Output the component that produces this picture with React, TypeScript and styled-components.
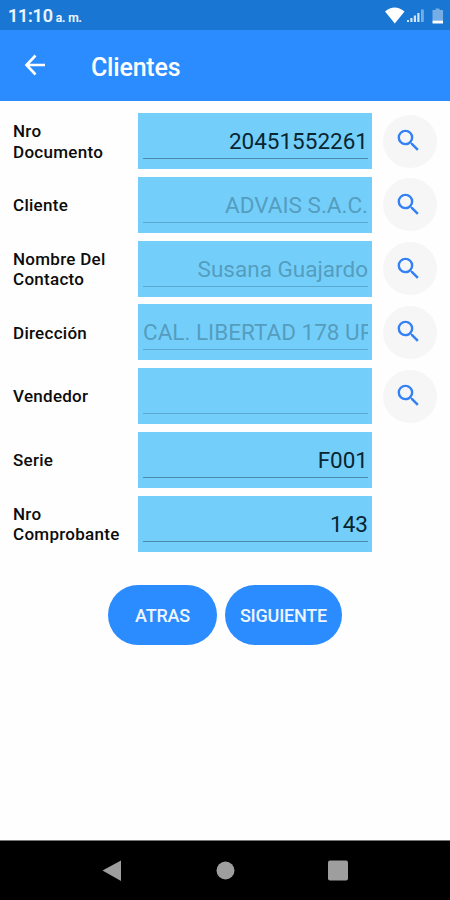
import React from "react";
import styled, { createGlobalStyle } from "styled-components";

const GlobalStyle = createGlobalStyle`
  * { box-sizing: border-box; }
  body { margin: 0; background: #fff; font-family: Roboto, sans-serif; }
`;

const Screen = styled.div`
  width: 450px;
  height: 900px;
  display: flex;
  flex-direction: column;
  overflow: hidden;
  background: #fefefe;
`;

const StatusBar = styled.header`
  height: 30px;
  padding: 3px 6px 0 8px;
  display: flex;
  align-items: center;
  justify-content: space-between;
  background: #1976d2;
  color: #eef6ff;
`;

const Clock = styled.div`
  font-size: 18px;
  font-weight: 500;
  line-height: 24px;
  letter-spacing: -0.2px;
  -webkit-text-stroke: 0.2px currentColor;
`;

const Meridiem = styled.span`
  margin-left: 3px;
  font-size: 12px;
  letter-spacing: -0.1px;
`;

const StatusIcons = styled.svg`
  display: block;
  width: 60px;
  height: 20px;
  margin-bottom: 3px;
`;

const AppBar = styled.div`
  height: 70.5px;
  padding-left: 22px;
  display: flex;
  align-items: center;
  background: #2b8cff;
  color: #fff;
`;

const BackButton = styled.button`
  width: 69px;
  height: 26px;
  padding: 0;
  border: 0;
  background: none;
  color: inherit;
`;

const BackIcon = styled.svg`
  display: block;
  width: 26px;
  height: 26px;
`;

const Title = styled.h1`
  margin: 5px 0 0;
  font-size: 25px;
  line-height: 30px;
  font-weight: 500;
  letter-spacing: -0.2px;
`;

const Form = styled.form`
  padding: 12.5px 13px 0;
  display: grid;
  row-gap: 7.8px;
`;

const Row = styled.div`
  height: 56px;
  display: grid;
  grid-template-columns: 125px 234px 54px;
  align-items: center;
`;

const Label = styled.label`
  padding: 1px 12px 0 0;
  font-size: 17px;
  line-height: 20.6px;
  font-weight: 500;
  letter-spacing: 0.28px;
  color: #0c0c0c;
`;

const Field = styled.div`
  height: 56px;
  padding: 12px 4px 0 5px;
  background: #73cffa;
`;

const Value = styled.div<{ $muted?: boolean; $start?: boolean }>`
  height: 34px;
  border-bottom: 1.5px solid ${(p) => (p.$muted ? "#5ba9d0" : "#4b8aa8")};
  overflow: hidden;
  white-space: nowrap;
  text-align: ${(p) => (p.$start ? "left" : "right")};
  font-size: 22.5px;
  line-height: 33.5px;
  color: ${(p) => (p.$muted ? "#559dbf" : "#0a2530")};
`;

const SearchButton = styled.button`
  width: 54px;
  height: 53px;
  margin-left: 11px;
  padding: 0 3px 1px 0;
  display: grid;
  place-items: center;
  border: 0;
  border-radius: 50%;
  background: #f6f6f6;
  color: #3480f5;
`;

const SearchIcon = styled.svg`
  width: 29px;
  height: 29px;
`;

const Actions = styled.div`
  margin-top: 33px;
  display: flex;
  justify-content: center;
  gap: 8px;
`;

const ActionButton = styled.button<{ $width: number }>`
  width: ${(p) => p.$width}px;
  height: 60px;
  padding: 2px 0 0;
  border: 0;
  border-radius: 30px;
  background: #2b8cff;
  color: #edf6ff;
  font: 500 18px/24px Roboto, sans-serif;
  letter-spacing: -0.2px;
`;

const NavBar = styled.nav`
  height: 60px;
  margin-top: auto;
  border-top: 1px solid #777;
  background: #000;
`;

const NavIcons = styled.svg`
  display: block;
  width: 450px;
  height: 59px;
`;

interface Entry {
  label: string;
  value: string;
  muted?: boolean;
  start?: boolean;
  search?: boolean;
}

const entries: Entry[] = [
  { label: "Nro Documento", value: "20451552261", search: true },
  { label: "Cliente", value: "ADVAIS S.A.C.", muted: true, search: true },
  { label: "Nombre Del Contacto", value: "Susana Guajardo", muted: true, search: true },
  { label: "Dirección", value: "CAL. LIBERTAD 178 UR", muted: true, start: true, search: true },
  { label: "Vendedor", value: "", muted: true, search: true },
  { label: "Serie", value: "F001" },
  { label: "Nro Comprobante", value: "143" },
];

export default function App() {
  return (
    <Screen>
      <GlobalStyle />
      <StatusBar>
        <Clock>
          11:10<Meridiem>a. m.</Meridiem>
        </Clock>
        <StatusIcons viewBox="384 5 60 20">
          <path d="M385 11.5Q394.500 3.500 404.500 11.500L394.800 23.500Z" fill="#fff" />
          <path d="M407 22v-2h2v2zM410.300 22v-4h2.200v4zM413.800 22v-6.500h2.200v6.500zM417.300 22v-9h2.200v9z" fill="#cfe5fa" />
          <path d="M421 22v-12.500h2.800v12.500z" fill="#75aee5" />
          <path d="M432.500 10h3V8.500h4V10h3.500v10.500h-10.500z" fill="#75aee5" />
          <path d="M432.500 20.500h10.500V23.500h-10.500z" fill="#fff" />
        </StatusIcons>
      </StatusBar>
      <AppBar>
        <BackButton type="button" aria-label="Atrás">
          <BackIcon viewBox="0 0 26 26" fill="none" stroke="currentColor" strokeWidth="2.600">
            <path d="M23 13H4.500M13.500 3.500L4.500 13l9 9.500" />
          </BackIcon>
        </BackButton>
        <Title>Clientes</Title>
      </AppBar>
      <Form>
        {entries.map((e) => (
          <Row key={e.label}>
            <Label>{e.label}</Label>
            <Field>
              <Value $muted={e.muted} $start={e.start}>{e.value}</Value>
            </Field>
            {e.search && (
              <SearchButton type="button" aria-label={`Buscar ${e.label}`}>
                <SearchIcon viewBox="0 0 24 24" fill="currentColor">
                  <path d="M15.500 14h-.79l-.28-.27A6.471 6.471 0 0 0 16 9.500 6.500 6.500 0 1 0 9.500 16c1.610 0 3.090-.59 4.230-1.570l.27.28v.79l5 4.990L20.490 19l-4.990-5zm-6 0C7.010 14 5 11.990 5 9.500S7.010 5 9.500 5 14 7.010 14 9.500 11.990 14 9.500 14z" />
                </SearchIcon>
              </SearchButton>
            )}
          </Row>
        ))}
      </Form>
      <Actions>
        <ActionButton type="button" $width={109}>ATRAS</ActionButton>
        <ActionButton type="button" $width={117}>SIGUIENTE</ActionButton>
      </Actions>
      <NavBar>
        <NavIcons viewBox="0 841 450 59" fill="#9e9e9e">
          <path d="M102.500 870.500L121 860.500V881z" />
          <circle cx="225.500" cy="870.500" r="9" />
          <rect x="328" y="860.500" width="20" height="20" rx="2" />
        </NavIcons>
      </NavBar>
    </Screen>
  );
}
